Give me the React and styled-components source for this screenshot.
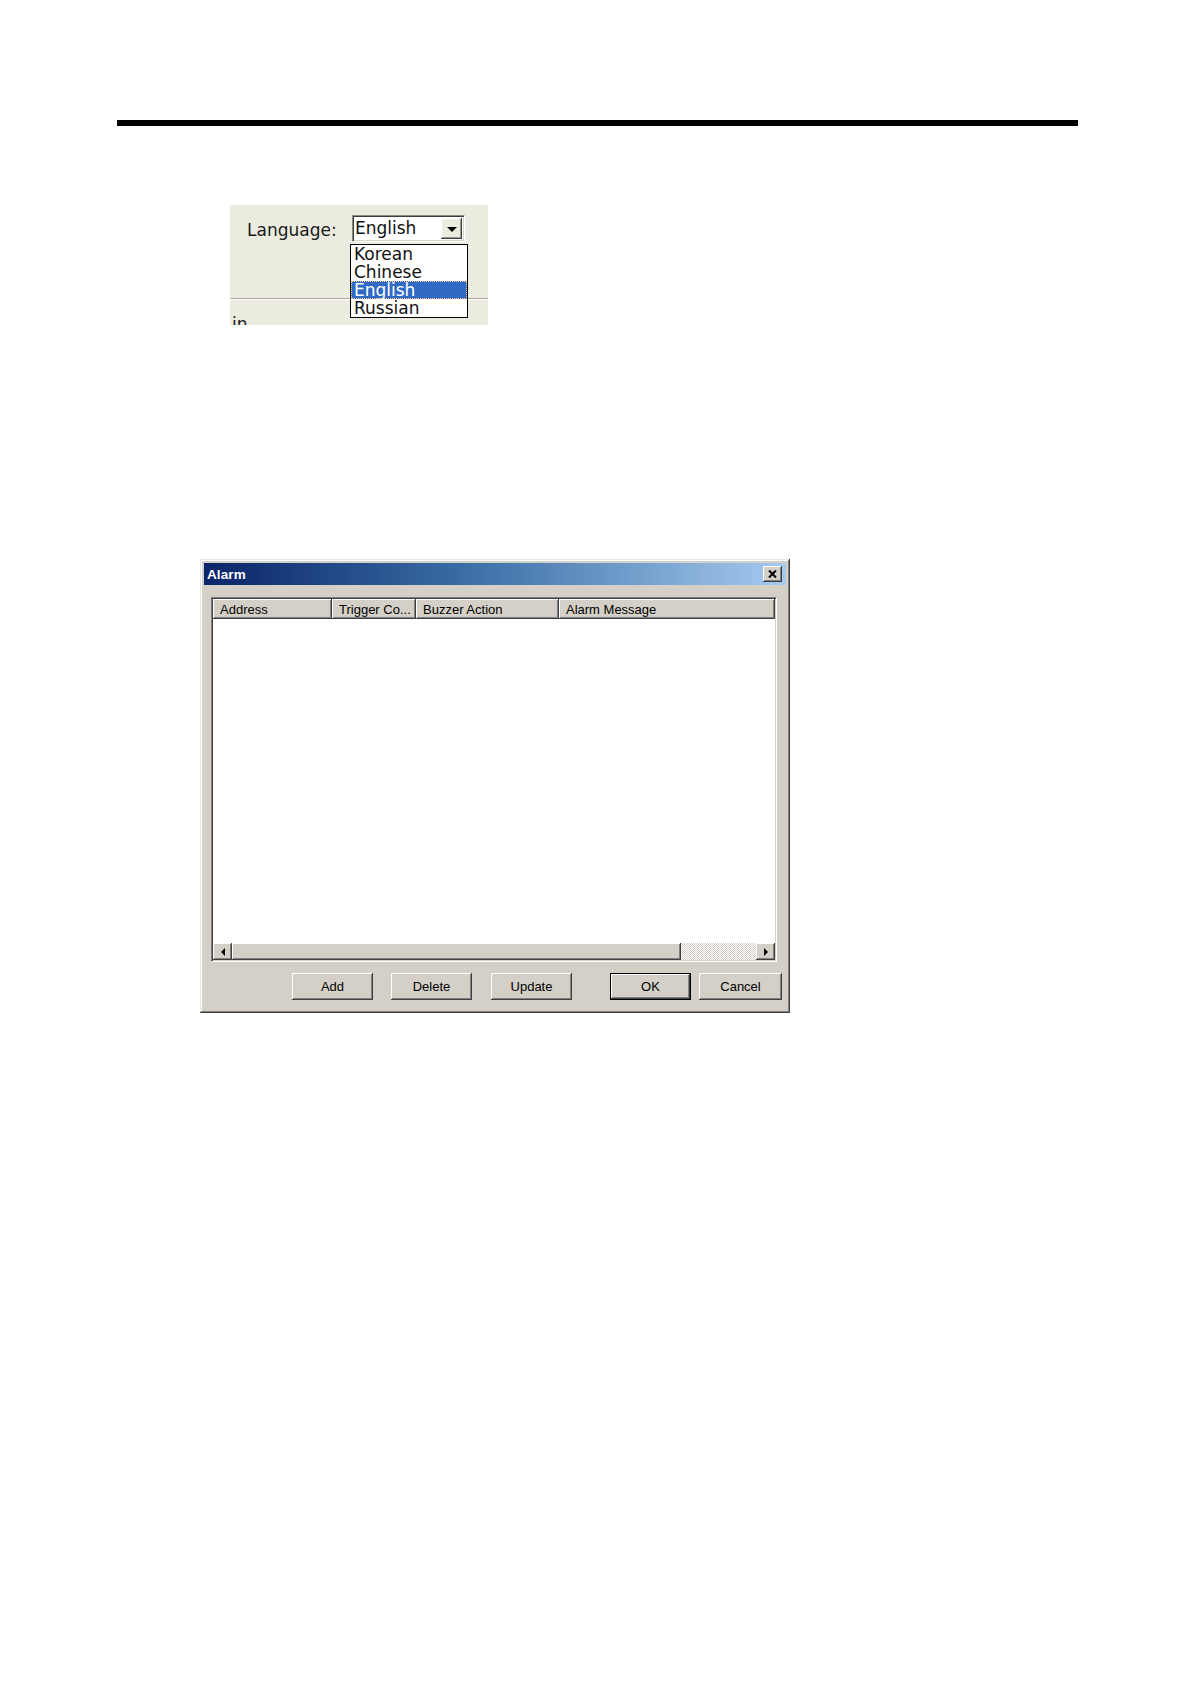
import React from 'react';
import styled, { createGlobalStyle } from 'styled-components';

const GlobalStyle = createGlobalStyle`
  html, body {
    margin: 0;
    padding: 0;
    background: #ffffff;
  }
  * {
    box-sizing: border-box;
  }
`;

const languages = ['Korean', 'Chinese', 'English', 'Russian'];

const columns = [
  { label: 'Address', width: 119 },
  { label: 'Trigger Co...', width: 84 },
  { label: 'Buzzer Action', width: 143 },
  { label: 'Alarm Message', width: 216 },
];

const buttons = [
  { label: 'Add', space: 0 },
  { label: 'Delete', space: 18 },
  { label: 'Update', space: 19 },
  { label: 'OK', space: 38, isDefault: true },
  { label: 'Cancel', space: 8, width: 83 },
];

export default function App() {
  return (
    <>
      <GlobalStyle />
      <Page>
        <Rule />

        <LanguagePanel>
          <LanguageRow>
            <PanelLabel>Language:</PanelLabel>
            <Combo>
              <ComboValue>English</ComboValue>
              <ComboArrow>
                <DownTriangle />
              </ComboArrow>
              <DropList>
                {languages.map(lang => (
                  <DropItem key={lang} selected={lang === 'English'}>
                    {lang}
                  </DropItem>
                ))}
              </DropList>
            </Combo>
          </LanguageRow>
          <Separator />
          <CutText>in</CutText>
        </LanguagePanel>

        <Dialog>
          <TitleBar>
            <TitleText>Alarm</TitleText>
            <CloseButton>
              <svg width="9" height="8" viewBox="0 0 9 8">
                <path d="M1 0.5 L8 7.5 M8 0.5 L1 7.5" stroke="#000" strokeWidth="2" />
              </svg>
            </CloseButton>
          </TitleBar>

          <DialogBody>
            <ListView>
              <HeaderRow>
                {columns.map(col => (
                  <HeaderCell key={col.label} width={col.width}>
                    {col.label}
                  </HeaderCell>
                ))}
                <HeaderFiller />
              </HeaderRow>
              <ListArea />
              <HScrollBar>
                <ScrollArrow>
                  <SideTriangle dir="left" />
                </ScrollArrow>
                <ScrollThumb width={449} />
                <ScrollTrack />
                <ScrollArrow>
                  <SideTriangle dir="right" />
                </ScrollArrow>
              </HScrollBar>
            </ListView>

            <ButtonRow>
              {buttons.map(btn => (
                <DialogButton
                  key={btn.label}
                  space={btn.space}
                  width={btn.width}
                  isDefault={btn.isDefault}
                >
                  {btn.label}
                </DialogButton>
              ))}
            </ButtonRow>
          </DialogBody>
        </Dialog>
      </Page>
    </>
  );
}

const Page = styled.div`
  width: 1190px;
  min-height: 1684px;
  padding-top: 120px;
  background: #ffffff;
`;

const Rule = styled.div`
  width: 961px;
  height: 6px;
  margin-left: 117px;
  background: #000000;
`;

/* language screenshot */

const LanguagePanel = styled.div`
  position: relative;
  width: 258px;
  height: 120px;
  margin: 79px 0 0 230px;
  overflow: hidden;
  background: #ecebe0;
  font-family: "DejaVu Sans", "Liberation Sans", sans-serif;
  font-size: 17px;
  color: #1a1a1a;
`;

const LanguageRow = styled.div`
  display: flex;
  align-items: flex-start;
  height: 38px;
  padding: 10px 0 0 17px;
`;

const PanelLabel = styled.span`
  width: 105px;
  height: 27px;
  padding-top: 3px;
  line-height: 25px;
`;

const Combo = styled.div`
  position: relative;
  display: flex;
  align-items: center;
  width: 113px;
  height: 27px;
  background: #ffffff;
  border-top: 1px solid #8a8a84;
  border-left: 1px solid #8a8a84;
  border-bottom: 1px solid #ffffff;
  border-right: 1px solid #ffffff;
  box-shadow: inset 1px 1px 0 #3c3c3c, inset -1px -1px 0 #d8d6cc;
`;

const ComboValue = styled.span`
  flex: 1;
  padding-left: 2px;
  line-height: 25px;
  color: #111;
`;

const ComboArrow = styled.div`
  display: flex;
  align-items: center;
  justify-content: center;
  width: 21px;
  height: 21px;
  margin-right: 2px;
  background: #ecebe0;
  box-shadow: inset -1px -1px 0 #404040, inset 1px 1px 0 #ffffff,
    inset -2px -2px 0 #9a9a94;
`;

const DownTriangle = styled.span`
  width: 0;
  height: 0;
  border-left: 5px solid transparent;
  border-right: 5px solid transparent;
  border-top: 5px solid #000;
  margin-top: 2px;
`;

const DropList = styled.div`
  position: absolute;
  left: -3px;
  top: 28px;
  width: 118px;
  padding: 0;
  background: #ffffff;
  border: 1px solid #000000;
  z-index: 2;
`;

const DropItem = styled.div`
  height: 18px;
  padding-left: 3px;
  line-height: 18px;
  white-space: nowrap;
  color: ${props => (props.selected ? '#ffffff' : '#111')};
  background: ${props => (props.selected ? '#316ac5' : 'transparent')};
  outline: ${props => (props.selected ? '1px dotted #ffd680' : 'none')};
  outline-offset: -1px;
`;

const Separator = styled.div`
  height: 2px;
  margin-top: 55px;
  border-top: 1px solid #aca899;
  border-bottom: 1px solid #ffffff;
`;

const CutText = styled.div`
  margin-top: 14px;
  padding-left: 2px;
  line-height: 20px;
`;

/* alarm dialog */

const Dialog = styled.div`
  display: flex;
  flex-direction: column;
  width: 590px;
  height: 454px;
  margin: 234px 0 0 200px;
  padding: 4px;
  background: #d4d0c8;
  box-shadow: inset -1px -1px 0 #404040, inset 1px 1px 0 #e8e6e0,
    inset -2px -2px 0 #808080, inset 2px 2px 0 #ffffff;
  font-family: "Liberation Sans", Arial, sans-serif;
  font-size: 13px;
  color: #000;
`;

const TitleBar = styled.div`
  display: flex;
  align-items: center;
  height: 22px;
  padding: 0 4px 0 3px;
  background: linear-gradient(to right, #0a246a 0%, #3a6ea5 45%, #a6caf0 100%);
`;

const TitleText = styled.span`
  flex: 1;
  color: #ffffff;
  font-weight: bold;
  font-size: 13.5px;
  letter-spacing: 0.1px;
`;

const CloseButton = styled.div`
  display: flex;
  align-items: center;
  justify-content: center;
  width: 19px;
  height: 16px;
  background: #d4d0c8;
  box-shadow: inset -1px -1px 0 #404040, inset 1px 1px 0 #ffffff,
    inset -2px -2px 0 #808080;
`;

const DialogBody = styled.div`
  display: flex;
  flex-direction: column;
  flex: 1;
  padding: 12px 4px 9px 4px;
`;

const ListView = styled.div`
  display: flex;
  flex-direction: column;
  height: 365px;
  margin: 0 5px 0 3px;
  background: #ffffff;
  border-top: 1px solid #808080;
  border-left: 1px solid #808080;
  border-bottom: 1px solid #ffffff;
  border-right: 1px solid #ffffff;
  box-shadow: inset 1px 1px 0 #404040, inset -1px -1px 0 #d4d0c8;
  padding: 1px;
`;

const HeaderRow = styled.div`
  display: flex;
  height: 20px;
`;

const HeaderCell = styled.div`
  display: flex;
  align-items: center;
  width: ${props => props.width}px;
  height: 20px;
  padding-left: 7px;
  background: #d4d0c8;
  white-space: nowrap;
  overflow: hidden;
  box-shadow: inset -1px -1px 0 #404040, inset 1px 1px 0 #ffffff,
    inset -2px -2px 0 #808080;
`;

const HeaderFiller = styled.div`
  flex: 1;
  background: #ffffff;
`;

const ListArea = styled.div`
  flex: 1;
  background: #ffffff;
`;

const HScrollBar = styled.div`
  display: flex;
  height: 17px;
`;

const ScrollArrow = styled.div`
  display: flex;
  align-items: center;
  justify-content: center;
  width: 19px;
  height: 17px;
  background: #d4d0c8;
  box-shadow: inset -1px -1px 0 #404040, inset 1px 1px 0 #ffffff,
    inset -2px -2px 0 #808080;
`;

const SideTriangle = styled.span`
  width: 0;
  height: 0;
  border-top: 4px solid transparent;
  border-bottom: 4px solid transparent;
  border-left: ${props => (props.dir === 'right' ? '4px solid #000' : 'none')};
  border-right: ${props => (props.dir === 'left' ? '4px solid #000' : 'none')};
`;

const ScrollThumb = styled.div`
  width: ${props => props.width}px;
  height: 17px;
  background: #d4d0c8;
  box-shadow: inset -1px -1px 0 #404040, inset 1px 1px 0 #ffffff,
    inset -2px -2px 0 #808080;
`;

const ScrollTrack = styled.div`
  flex: 1;
  background-color: #d4d0c8;
  background-image: conic-gradient(#ffffff 25%, #d4d0c8 0 50%, #ffffff 0 75%, #d4d0c8 0);
  background-size: 2px 2px;
`;

const ButtonRow = styled.div`
  display: flex;
  justify-content: flex-end;
  margin-top: 11px;
`;

const DialogButton = styled.div`
  display: flex;
  align-items: center;
  justify-content: center;
  width: ${props => props.width || 81}px;
  height: 27px;
  margin-left: ${props => props.space}px;
  background: #d4d0c8;
  font-size: 13px;
  border: ${props => (props.isDefault ? '1px solid #000' : 'none')};
  box-shadow: inset -1px -1px 0 #404040, inset 1px 1px 0 #ffffff,
    inset -2px -2px 0 #808080;
`;
